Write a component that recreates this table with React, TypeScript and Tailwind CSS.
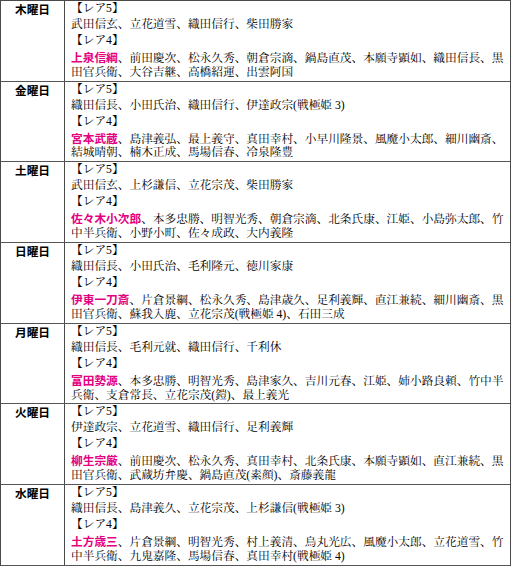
import React from 'react';

type DayRow = {
  day: string;
  rare5: string;
  star: string;
  rare4a: string;
  rare4b: string;
};

const rows: DayRow[] = [
  {
    day: '木曜日',
    rare5: '武田信玄、立花道雪、織田信行、柴田勝家',
    star: '上泉信綱',
    rare4a: '、前田慶次、松永久秀、朝倉宗滴、鍋島直茂、本願寺顕如、織田信長、黒',
    rare4b: '田官兵衛、大谷吉継、高橋紹運、出雲阿国',
  },
  {
    day: '金曜日',
    rare5: '織田信長、小田氏治、織田信行、伊達政宗(戦極姫 3)',
    star: '宮本武蔵',
    rare4a: '、島津義弘、最上義守、真田幸村、小早川隆景、風魔小太郎、細川幽斎、',
    rare4b: '結城晴朝、楠木正成、馬場信春、冷泉隆豊',
  },
  {
    day: '土曜日',
    rare5: '武田信玄、上杉謙信、立花宗茂、柴田勝家',
    star: '佐々木小次郎',
    rare4a: '、本多忠勝、明智光秀、朝倉宗滴、北条氏康、江姫、小島弥太郎、竹',
    rare4b: '中半兵衛、小野小町、佐々成政、大内義隆',
  },
  {
    day: '日曜日',
    rare5: '織田信長、小田氏治、毛利隆元、徳川家康',
    star: '伊東一刀斎',
    rare4a: '、片倉景綱、松永久秀、島津歳久、足利義輝、直江兼続、細川幽斎、黒',
    rare4b: '田官兵衛、蘇我入鹿、立花宗茂(戦極姫 4)、石田三成',
  },
  {
    day: '月曜日',
    rare5: '織田信長、毛利元就、織田信行、千利休',
    star: '富田勢源',
    rare4a: '、本多忠勝、明智光秀、島津家久、吉川元春、江姫、姉小路良頼、竹中半',
    rare4b: '兵衛、支倉常長、立花宗茂(鎧)、最上義光',
  },
  {
    day: '火曜日',
    rare5: '伊達政宗、立花道雪、織田信行、足利義輝',
    star: '柳生宗厳',
    rare4a: '、前田慶次、松永久秀、真田幸村、北条氏康、本願寺顕如、直江兼続、黒',
    rare4b: '田官兵衛、武蔵坊弁慶、鍋島直茂(素顔)、斎藤義龍',
  },
  {
    day: '水曜日',
    rare5: '織田信長、島津義久、立花宗茂、上杉謙信(戦極姫 3)',
    star: '土方歳三',
    rare4a: '、片倉景綱、明智光秀、村上義清、烏丸光広、風魔小太郎、立花道雪、竹',
    rare4b: '中半兵衛、九鬼嘉隆、馬場信春、真田幸村(戦極姫 4)',
  },
];

export default function App() {
  return (
    <div className="w-[512px] h-[566px] bg-white overflow-hidden">
      <div className="w-[511px] border-t border-l border-r border-[#4a4a4a] text-[11.7px] leading-[15.95px] text-black">
        {rows.map((row) => (
          <div key={row.day} className="flex border-b border-[#555]">
            <div className="w-[64px] shrink-0 border-r border-[#4a4a4a] text-center font-bold font-['Noto_Sans_CJK_JP',sans-serif]">
              <div className="h-[15.95px]">{row.day}</div>
            </div>
            <div className="flex-1 pl-[6px] whitespace-nowrap font-['Liberation_Serif','Noto_Serif_CJK_JP','Noto_Sans_CJK_JP',serif]">
              <div className="h-[15.95px]">【レア5】</div>
              <div className="h-[15.95px]">{row.rare5}</div>
              <div className="h-[15.95px]">【レア4】</div>
              <div className="h-[15.95px]">
                <span className="font-bold text-[#e4007f] font-['Noto_Sans_CJK_JP',sans-serif]">{row.star}</span>
                {row.rare4a}
              </div>
              <div className="h-[15.95px]">{row.rare4b}</div>
            </div>
          </div>
        ))}
      </div>
    </div>
  );
}
